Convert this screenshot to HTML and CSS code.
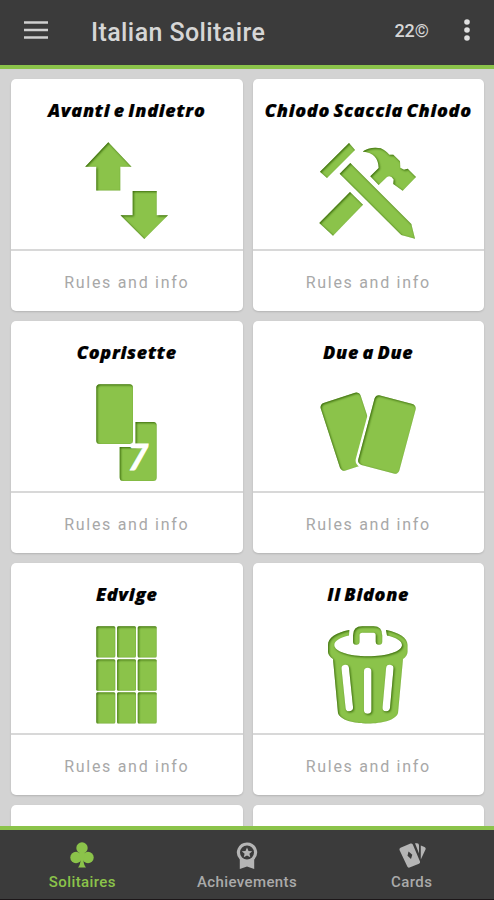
FILE: index.html
```
<!DOCTYPE html>
<html lang="en">
<head>
  <meta charset="UTF-8" />
  <meta name="viewport" content="width=device-width, initial-scale=1.0" />
  <title>Italian Solitaire</title>
  <link rel="stylesheet" href="styles.css">
</head>
<body>
  <header class="topbar">
    <svg class="menu" viewBox="0 0 26 18"><path d="M1 1.5h24M1 9h24M1 16.5h24" /></svg>
    <h1>Italian Solitaire</h1>
    <span class="coins">22©</span>
    <svg class="more" viewBox="0 0 8 24"><circle cx="4" cy="4" r="2.8" /><circle cx="4" cy="12" r="2.8" /><circle cx="4" cy="20" r="2.8" /></svg>
  </header>

  <main class="games">
    <section class="card">
      <h2>Avanti e Indietro</h2>
      <svg class="icon" viewBox="0 0 100 100">
        <defs>
          <filter id="inset" x="-5%" y="-5%" width="110%" height="110%" color-interpolation-filters="sRGB">
            <feOffset in="SourceAlpha" dx="0.8" dy="1.2" />
            <feGaussianBlur stdDeviation="1" result="blur" />
            <feComposite in="SourceAlpha" in2="blur" operator="out" result="edge" />
            <feFlood flood-color="#2c5a00" flood-opacity="0.85" />
            <feComposite in2="edge" operator="in" result="shade" />
            <feMerge><feMergeNode in="SourceGraphic" /><feMergeNode in="shade" /></feMerge>
          </filter>
        </defs>
        <g filter="url(#inset)">
          <path d="M31.3 1.3L54.5 25.7H43.3V49.5H19.3V25.7H8.2Z" />
          <path d="M55.7 50H79.7V74.3H91L67.3 98L43.5 74.3H55.7Z" />
        </g>
      </svg>
      <a class="rules">Rules and info</a>
    </section>

    <section class="card">
      <h2>Chiodo Scaccia Chiodo</h2>
      <svg class="icon" viewBox="0 0 100 100">
        <g filter="url(#inset)">
          <path d="M31 2L37 9L9 37L2 30.7Z" />
          <path d="M32.3 22L93.3 83L97 97.7L83.3 94L21.7 32.7Z" />
          <path d="M32 51L45 63.7L15 94.7L1.3 82Z" />
          <path d="M44.7 10.5C49 7 57 5.8 62.7 7.3C66 8.5 69 11 71.3 13.7H75.3L82 20.3L82.3 26.7L86 28.7L89.7 27.7L98 36L84.7 49.7L75.3 43L75.7 38.5Q72.5 33.5 69 36L60.7 44L52.3 35.3L60.7 27C60.5 18 56 11.5 44.7 10.5Z" />
        </g>
      </svg>
      <a class="rules">Rules and info</a>
    </section>

    <section class="card">
      <h2>Coprisette</h2>
      <svg class="icon" viewBox="0 0 100 100">
        <g filter="url(#inset)">
          <rect x="19.3" y="1.3" width="36.7" height="59.7" rx="3.5" />
          <path d="M58.5 39H76.5Q79.7 39 79.7 42.5V94.5Q79.7 98 76.2 98H46.2Q42.7 98 42.7 94.5V64H58.5Z" />
        </g>
        <text class="seven" x="50.5" y="87">7</text>
      </svg>
      <a class="rules">Rules and info</a>
    </section>

    <section class="card">
      <h2>Due a Due</h2>
      <svg class="icon" viewBox="0 0 100 100">
        <g filter="url(#inset)">
          <rect x="11.3" y="13.1" width="42" height="71" rx="4.5" transform="rotate(-18 32.3 48.6)" />
        </g>
        <rect class="gap" x="47.7" y="15.5" width="42.5" height="72" rx="4.5" transform="rotate(15 69 51.5)" />
        <g filter="url(#inset)">
          <rect x="47.7" y="15.5" width="42.5" height="72" rx="4.5" transform="rotate(15 69 51.5)" />
        </g>
      </svg>
      <a class="rules">Rules and info</a>
    </section>

    <section class="card">
      <h2>Edvige</h2>
      <svg class="icon" viewBox="0 0 100 100">
        <g filter="url(#inset)">
          <rect x="19.3" y="1.3" width="19" height="31.3" rx="1.5" />
          <rect x="40" y="1.3" width="19" height="31.3" rx="1.5" />
          <rect x="60.7" y="1.3" width="19" height="31.3" rx="1.5" />
          <rect x="19.3" y="34.3" width="19" height="31.5" rx="1.5" />
          <rect x="40" y="34.3" width="19" height="31.5" rx="1.5" />
          <rect x="60.7" y="34.3" width="19" height="31.5" rx="1.5" />
          <rect x="19.3" y="67.3" width="19" height="31.3" rx="1.5" />
          <rect x="40" y="67.3" width="19" height="31.3" rx="1.5" />
          <rect x="60.7" y="67.3" width="19" height="31.3" rx="1.5" />
        </g>
      </svg>
      <a class="rules">Rules and info</a>
    </section>

    <section class="card">
      <h2>Il Bidone</h2>
      <svg class="icon" viewBox="0 0 100 100">
        <defs>
          <mask id="slots">
            <rect width="100" height="100" fill="#fff" />
            <path class="slot" d="M27.3 43.5L31.3 82.5M49.7 46.5V85M71.8 43.5L68.3 82.5" />
          </mask>
        </defs>
        <g filter="url(#inset)">
          <path mask="url(#slots)" d="M31.3 5C18 7.5 10 13 10 20V27Q10.5 31 15 34L20 88C22 95 36 98.5 50 98.5S78 95 80 88L85 34Q89.3 31 89.5 27V20C89.5 13 81 7.5 68 5L69 10.5C78 12.5 84 16 84 20C84 26.5 69 31.3 50 31.3S16.3 26.5 16.3 20C16.3 16 22 12.5 31 10.5Z" />
          <path class="handle" d="M38.3 16.5V10.5Q38.3 4.6 44.3 4.6H55.5Q61 4.6 61 10.5V16.5" />
        </g>
      </svg>
      <a class="rules">Rules and info</a>
    </section>

    <section class="card"></section>
    <section class="card"></section>
  </main>

  <nav class="tabs">
    <a class="tab active">
      <svg viewBox="0 0 28 28">
        <circle cx="14" cy="7" r="5.7" /><circle cx="8" cy="16.5" r="5.7" /><circle cx="20" cy="16.5" r="5.7" />
        <path d="M12 9H16L15.5 19Q15.5 24 18 26.5H10Q12.5 24 12.5 19Z" />
        <circle cx="14" cy="14" r="3" />
      </svg>
      Solitaires
    </a>
    <a class="tab">
      <svg viewBox="0 0 28 28">
        <path fill-rule="evenodd" d="M14 1.5a10 10 0 0 1 7.2 17V28L14 25.5L6.8 28V18.5A10 10 0 0 1 14 1.5ZM14 4.5a7 7 0 1 0 0 14a7 7 0 1 0 0-14Z" />
        <path d="M14 6.5L15.5 10L19.2 10.3L16.4 12.7L17.3 16.3L14 14.4L10.7 16.3L11.6 12.7L8.8 10.3L12.5 10Z" />
      </svg>
      Achievements
    </a>
    <a class="tab">
      <svg viewBox="0 0 28 28">
        <path fill-rule="evenodd" d="M2.5 6.8L12.5 2.5Q14 2 14.8 3.5L22 20.5Q22.5 22 21 22.8L11.5 26.5Q10 27 9.3 25.5L1.5 9Q1 7.5 2.5 6.8ZM10.5 10.5L9.5 14.8L13 18L14.3 13.7Z" />
        <path d="M17 2.2H19Q21 2.2 21 4.2V12.5ZM22.8 4.5L26.5 6Q28.2 7 27.5 8.5L22.8 18.5Z" />
      </svg>
      Cards
    </a>
  </nav>
</body>
</html>
```
FILE: styles.css
```
* {
  box-sizing: border-box;
}
body {
  display: flex;
  flex-direction: column;
  height: 100vh;
  margin: 0;
  overflow: hidden;
  background: #d3d3d3;
  font-family: Roboto, sans-serif;
}
.topbar {
  display: flex;
  align-items: center;
  flex: none;
  height: 69px;
  padding: 0 23px 6px;
  background: #3b3b3b;
  border-bottom: 4px solid #8bc34a;
  color: #d6d6d6;
}
.menu {
  width: 26px;
  height: 18px;
  stroke: #d0d0d0;
  stroke-width: 2.6;
}
.topbar h1 {
  flex: 1;
  margin: 5px 0 0 42px;
  font-size: 25px;
  font-weight: 500;
  letter-spacing: 0.4px;
}
.coins {
  margin-top: 2px;
  font-size: 18px;
  font-weight: 500;
}
.more {
  width: 8px;
  height: 24px;
  margin-left: 34px;
  fill: #e0e0e0;
}
.games {
  display: grid;
  grid-template-columns: 1fr 1fr;
  grid-auto-rows: 232px;
  gap: 10px;
  flex: 1;
  min-height: 0;
  padding: 10px 10px 0 11px;
  overflow: hidden;
}
.card {
  display: flex;
  flex-direction: column;
  align-items: center;
  background: #fff;
  border-radius: 5px;
  box-shadow: 0 1px 2px rgba(0,0,0,0.15);
}
.card h2 {
  height: 24px;
  margin: 19px 0;
  font-family: "Open Sans", sans-serif;
  font-size: 18px;
  font-weight: 800;
  font-style: italic;
  letter-spacing: 0.7px;
  line-height: 24px;
  word-spacing: -2px;
  white-space: nowrap;
  color: #000;
  -webkit-text-stroke: 0.2px #000;
}
.icon {
  flex: none;
  width: 100px;
  height: 100px;
  fill: #8bc34a;
}
.icon .seven {
  font: italic 700 36px Lato, sans-serif;
  fill: #fff;
  stroke: #fff;
  stroke-width: 0.8;
}
.icon .gap {
  fill: none;
  stroke: #fff;
  stroke-width: 5;
}
.icon .slot {
  fill: none;
  stroke: #000;
  stroke-width: 7.5;
  stroke-linecap: round;
}
.icon .handle {
  fill: none;
  stroke: #8bc34a;
  stroke-width: 6.5;
  stroke-linecap: round;
}
.rules {
  width: 100%;
  height: 62px;
  margin-top: auto;
  border-top: 2px solid #d8d8d8;
  font-size: 16px;
  letter-spacing: 1.7px;
  line-height: 63px;
  text-align: center;
  color: #a8a8a8;
}
.tabs {
  display: flex;
  flex: none;
  height: 74px;
  background: #3b3b3b;
  border-top: 4px solid #8bc34a;
  border-bottom: 1px solid #1c1719;
}
.tab {
  display: flex;
  flex: 1;
  flex-direction: column;
  align-items: center;
  padding-top: 11px;
  font-size: 15px;
  font-weight: 500;
  letter-spacing: 0.4px;
  line-height: 18px;
  color: #aaa;
}
.tab svg {
  width: 28px;
  height: 28px;
  margin-bottom: 4px;
  fill: #b5b5b5;
}
.active {
  color: #8bc34a;
}
.active svg {
  fill: #8bc34a;
}
```
